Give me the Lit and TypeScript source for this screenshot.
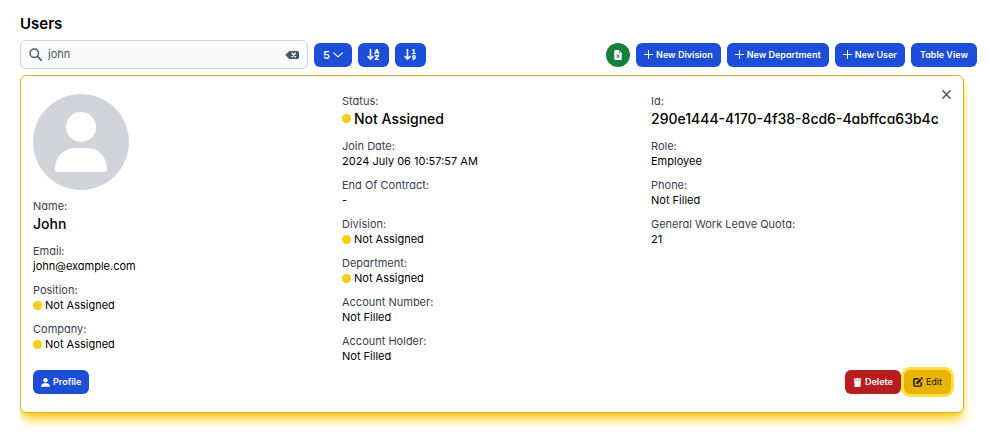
import { LitElement, html, css, svg, nothing } from "lit";
import { customElement, state } from "lit/decorators.js";

interface Field {
  label: string;
  value: string;
  large?: boolean;
  dot?: boolean;
}

const profile: Field[] = [
  { label: "Name", value: "John", large: true },
  { label: "Email", value: "john@example.com" },
  { label: "Position", value: "Not Assigned", dot: true },
  { label: "Company", value: "Not Assigned", dot: true },
];

const employment: Field[] = [
  { label: "Status", value: "Not Assigned", large: true, dot: true },
  { label: "Join Date", value: "2024 July 06 10:57:57 AM" },
  { label: "End Of Contract", value: "-" },
  { label: "Division", value: "Not Assigned", dot: true },
  { label: "Department", value: "Not Assigned", dot: true },
  { label: "Account Number", value: "Not Filled" },
  { label: "Account Holder", value: "Not Filled" },
];

const account: Field[] = [
  { label: "Id", value: "290e1444-4170-4f38-8cd6-4abffca63b4c", large: true },
  { label: "Role", value: "Employee" },
  { label: "Phone", value: "Not Filled" },
  { label: "General Work Leave Quota", value: "21" },
];

const icon = (body: unknown, cls = "", box = "0 0 16 16") =>
  html`<svg class="icon ${cls}" viewBox=${box} aria-hidden="true">${body}</svg>`;

const plus = svg`<path d="M8 .8v14.400M.8 8h14.400" fill="none" stroke="currentColor" stroke-width="1.700" stroke-linecap="round"/>`;
const search = svg`<circle cx="6.500" cy="6.500" r="5.200" fill="none" stroke="currentColor" stroke-width="1.700"/><path d="M10.400 10.400l4.600 4.600" stroke="currentColor" stroke-width="2" stroke-linecap="round"/>`;
const erase = svg`<path d="M6.100 3H15a2 2 0 0 1 2 2v6a2 2 0 0 1-2 2H6.100a2 2 0 0 1-1.500-.7L1 8.700a1 1 0 0 1 0-1.400l3.600-3.600A2 2 0 0 1 6.100 3z" fill="currentColor"/><path d="M8.600 6l4 4m0-4l-4 4" stroke="#f9fafb" stroke-width="1.700" stroke-linecap="round"/>`;
const chevron = svg`<path d="M1 4.500l7 6.500 7-6.500" fill="none" stroke="currentColor" stroke-width="1.900" stroke-linecap="round" stroke-linejoin="round"/>`;
const arrowDown = svg`<path d="M4.300 2v11.500M1.300 10.500l3 3.200 3-3.200" fill="none" stroke="currentColor" stroke-width="1.900" stroke-linecap="round" stroke-linejoin="round"/>`;
const sortAlpha = svg`${arrowDown}<path d="M9.800 7l2-5h.6l2 5M10.600 5.600h3M10 9.600h4.200l-4.200 4.400h4.400" fill="none" stroke="currentColor" stroke-width="1.700" stroke-linecap="round" stroke-linejoin="round"/>`;
const sortNumeric = svg`${arrowDown}<path d="M10.700 2.600l1.500-.8v5M10.500 6.900h3.400M12.200 9.400a1.600 1.600 0 1 1 0 3.200 1.600 1.600 0 0 1 0-3.200M13.800 11c0 1.900-.9 3-2.500 3.400" fill="none" stroke="currentColor" stroke-width="1.600" stroke-linecap="round" stroke-linejoin="round"/>`;
const sheet = svg`<path d="M9.300 0H4a2 2 0 0 0-2 2v12a2 2 0 0 0 2 2h8a2 2 0 0 0 2-2V4.700zM9.500 1.500L12.500 4.500h-2a1 1 0 0 1-1-1z" fill="currentColor" fill-rule="evenodd"/><path d="M6 7.500l4 5M10 7.500l-4 5" stroke="#15803d" stroke-width="1.500" stroke-linecap="round"/>`;
const cross = svg`<path d="M1.500 1.500l13 13m0-13l-13 13" stroke="currentColor" stroke-width="2.600" stroke-linecap="round"/>`;
const person = svg`<circle cx="8" cy="4" r="3.900" fill="currentColor"/><path d="M0 15.500c0-4 2.600-6.300 5.600-6.300h4.800c3 0 5.600 2.300 5.600 6.300z" fill="currentColor"/>`;
const trash = svg`<path d="M2 .8h4l.6-.8h2.800l.6.8h4a1 1 0 0 1 1 1V3H1V1.800a1 1 0 0 1 1-1zM2 4h12l-.8 11a1 1 0 0 1-1 1H3.800a1 1 0 0 1-1-1z" fill="currentColor"/>`;
const pencil = svg`<path d="M8 2.800H3A1.500 1.500 0 0 0 1.500 4.300V13A1.500 1.500 0 0 0 3 14.500h8.700a1.500 1.500 0 0 0 1.500-1.500V9" fill="none" stroke="currentColor" stroke-width="2.200" stroke-linecap="round"/><path d="M5 11.200l.6-3L11.200 2.600l2.400 2.400L8 10.600zM12 1.800l1-1a1.200 1.200 0 0 1 1.700 0l.7.700a1.200 1.200 0 0 1 0 1.700l-1 1z" fill="currentColor"/>`;

@customElement("app-root")
export class AppRoot extends LitElement {
  static styles = css`
    :host {
      display: block;
      box-sizing: border-box;
      min-height: 100vh;
      padding: 14px 13px 24px 20px;
      background: #fff;
      color: #000;
      font: 400 11px/15px Inter, "Liberation Sans", sans-serif;
      font-feature-settings: "cv11";
    }
    *, *::before {
      box-sizing: border-box;
    }
    h1 {
      margin: 0 0 6px;
      font-size: 15px;
      line-height: 20px;
      font-weight: 600;
    }
    .toolbar {
      display: flex;
      align-items: center;
      gap: 6px;
      margin-bottom: 6px;
    }
    .search {
      display: flex;
      align-items: center;
      gap: 6px;
      flex: 0 1 288px;
      height: 29px;
      padding: 0 8px;
      border: 1px solid #cbd5db;
      border-radius: 6px;
      background: #f9fafb;
      color: #4b5563;
    }
    .search input {
      flex: 1;
      min-width: 0;
      padding: 0;
      border: 0;
      outline: 0;
      background: none;
      color: #4b5563;
      font: inherit;
      font-feature-settings: inherit;
    }
    button {
      display: inline-flex;
      align-items: center;
      justify-content: center;
      gap: 3px;
      height: 24px;
      padding: 0 8px;
      border: 0;
      border-radius: 6px;
      background: #1d4ed8;
      color: #fff;
      font: 600 9px/12px Inter, "Liberation Sans", sans-serif;
      font-feature-settings: inherit;
      white-space: nowrap;
      cursor: pointer;
    }
    .roomy {
      padding: 0 9px;
    }
    .count {
      font-size: 11px;
    }
    .actions {
      display: flex;
      gap: 6px;
      margin-left: auto;
    }
    .round {
      width: 24px;
      padding: 0;
      border-radius: 50%;
      background: #15803d;
    }
    .bare {
      height: auto;
      padding: 0;
      background: none;
      color: #4b5563;
    }
    .icon {
      display: block;
      flex: none;
      width: 9px;
      height: 9px;
    }
    .icon.medium { width: 10px; height: 10px; }
    .icon.big { width: 13px; height: 13px; }
    .icon.wide { width: 14px; height: 10px; }
    .card {
      position: relative;
      margin-right: 13px;
      padding: 18px 12px;
      border: 1px solid #d8ae2a;
      border-radius: 6px;
      background: #fff;
      box-shadow: 0 8px 11px -2px #facc15, 0 3px 5px -3px #facc15;
      clip-path: inset(0 -20px -30px 0);
    }
    .close {
      position: absolute;
      top: 14px;
      right: 12px;
    }
    .columns {
      display: grid;
      grid-template-columns: repeat(3, minmax(0, 1fr));
      gap: 9px;
    }
    .avatar {
      display: block;
      width: 96px;
      height: 96px;
      margin-bottom: 9px;
    }
    dl {
      display: flex;
      flex-direction: column;
      gap: 9px;
      margin: 0;
    }
    dt {
      color: #374151;
    }
    dd {
      display: flex;
      align-items: center;
      gap: 3px;
      margin: 0;
    }
    .large {
      padding-bottom: 2px;
      font-size: 14px;
      line-height: 19px;
      font-weight: 500;
    }
    .dot::before {
      content: "";
      width: 9px;
      height: 9px;
      border-radius: 50%;
      background: #facc15;
    }
    footer {
      display: flex;
      justify-content: space-between;
      margin-top: 6px;
    }
    .pair {
      display: flex;
      gap: 3px;
    }
    .delete {
      background: #b91c1c;
    }
    .edit {
      background: #eab308;
      color: #111;
      font-weight: 400;
      box-shadow: 0 0 0 3px #fde047;
    }
  `;

  @state() private query = "john";

  private fields(items: Field[]) {
    return html`<dl>
      ${items.map(
        (f) => html`<div>
          <dt>${f.label}:</dt>
          <dd class="${f.large ? "large" : ""} ${f.dot ? "dot" : ""}">${f.value}</dd>
        </div>`
      )}
    </dl>`;
  }

  render() {
    return html`
      <h1>Users</h1>
      <div class="toolbar">
        <div class="search">
          ${icon(search, "big")}
          <input
            type="text"
            aria-label="Search users"
            .value=${this.query}
            @input=${(e: Event) => (this.query = (e.target as HTMLInputElement).value)}
          />
          ${this.query
            ? html`<button class="bare" aria-label="Clear search" @click=${() => (this.query = "")}>
                ${icon(erase, "wide", "0 2 17 12")}
              </button>`
            : nothing}
        </div>
        <button class="count roomy">5 ${icon(chevron, "medium")}</button>
        <button class="roomy" aria-label="Sort alphabetically">${icon(sortAlpha, "big")}</button>
        <button class="roomy" aria-label="Sort numerically">${icon(sortNumeric, "big")}</button>
        <div class="actions">
          <button class="round" aria-label="Export spreadsheet">${icon(sheet, "medium")}</button>
          <button>${icon(plus)} New Division</button>
          <button>${icon(plus)} New Department</button>
          <button>${icon(plus)} New User</button>
          <button class="roomy">Table View</button>
        </div>
      </div>
      <section class="card">
        <button class="bare close" aria-label="Close">${icon(cross)}</button>
        <div class="columns">
          <div>
            <svg class="avatar" viewBox="0 0 96 96" role="img" aria-label="User photo">
              <circle cx="48" cy="48" r="48" fill="#d1d5db" />
              <circle cx="48" cy="33" r="15" fill="#fff" />
              <path d="M22 75c0-12 9-21 20-21h12c11 0 20 9 20 21q0 3-3 3H25q-3 0-3-3z" fill="#fff" />
            </svg>
            ${this.fields(profile)}
          </div>
          ${this.fields(employment)} ${this.fields(account)}
        </div>
        <footer>
          <button>${icon(person)} Profile</button>
          <div class="pair">
            <button class="delete">${icon(trash)} Delete</button>
            <button class="edit roomy">${icon(pencil, "medium")} Edit</button>
          </div>
        </footer>
      </section>
    `;
  }
}
